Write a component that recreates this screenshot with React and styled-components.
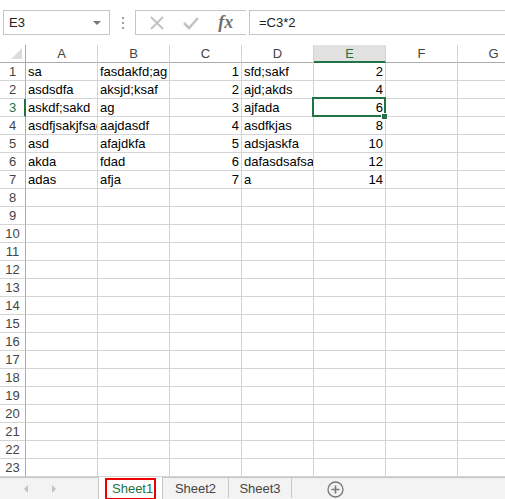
import React from "react";
import styled, { createGlobalStyle, css } from "styled-components";

const GREEN = "#217346";
const GRID = "#d4d4d4";
const EDGE = "#ababab";

const GlobalStyle = createGlobalStyle`
  html, body {
    margin: 0;
    padding: 0;
    background: #ffffff;
    font-family: "Liberation Sans", Arial, sans-serif;
    overflow: hidden;
  }
`;

const Page = styled.div`
  width: 505px;
  height: 499px;
  display: flex;
  flex-direction: column;
  overflow: hidden;
  background: #fff;
`;

const Toolbar = styled.div`
  height: 45px;
  flex: none;
  display: flex;
  align-items: flex-start;
  padding: 10px 0 0 3px;
  box-sizing: border-box;
`;

const NameBox = styled.div`
  width: 107px;
  height: 25px;
  box-sizing: border-box;
  border: 1px solid #c6c6c6;
  display: flex;
  align-items: center;
  justify-content: space-between;
  padding: 0 8px 0 5px;
  font-size: 13px;
  color: #222;
`;

const Caret = styled.span`
  width: 0;
  height: 0;
  border-left: 4px solid transparent;
  border-right: 4px solid transparent;
  border-top: 4px solid #777;
`;

const Dots = styled.div`
  width: 25px;
  height: 25px;
  display: flex;
  flex-direction: column;
  align-items: center;
  justify-content: center;
  gap: 3px;
  span {
    width: 2px;
    height: 2px;
    background: #a0a0a0;
  }
`;

const FxGroup = styled.div`
  width: 111px;
  height: 25px;
  box-sizing: border-box;
  border: 1px solid #c6c6c6;
  border-right: none;
  display: flex;
  align-items: center;
  justify-content: space-around;
  padding: 0 4px;
`;

const FxLabel = styled.span`
  font-family: "Liberation Serif", "Times New Roman", serif;
  font-style: italic;
  font-weight: bold;
  font-size: 18px;
  color: #6f6f6f;
`;

const FormulaInput = styled.div`
  flex: 1;
  height: 25px;
  margin-left: 3px;
  box-sizing: border-box;
  border-top: 1px solid #c6c6c6;
  border-bottom: 1px solid #c6c6c6;
  border-left: 1px solid #c6c6c6;
  display: flex;
  align-items: center;
  padding-left: 9px;
  font-size: 13px;
  color: #222;
`;

const Sheet = styled.div`
  flex: none;
  display: grid;
  grid-template-columns: 26px repeat(7, 72px);
  grid-auto-rows: 18px;
  overflow: hidden;
  width: 505px;
`;

const Corner = styled.div`
  position: relative;
  box-sizing: border-box;
  border-right: 1px solid ${EDGE};
  border-bottom: 1px solid ${EDGE};
  &::after {
    content: "";
    position: absolute;
    right: 3px;
    bottom: 3px;
    width: 0;
    height: 0;
    border-left: 11px solid transparent;
    border-bottom: 11px solid #dcdcdc;
  }
`;

const ColHead = styled.div`
  box-sizing: border-box;
  border-right: 1px solid ${GRID};
  border-bottom: 1px solid ${EDGE};
  display: flex;
  align-items: center;
  justify-content: center;
  font-size: 13px;
  color: #444;
  ${(p) =>
    p.$active &&
    css`
      background: #e1e1e1;
      color: ${GREEN};
      border-bottom: 2px solid ${GREEN};
    `}
`;

const RowHead = styled.div`
  box-sizing: border-box;
  border-right: 1px solid ${EDGE};
  border-bottom: 1px solid ${GRID};
  display: flex;
  align-items: center;
  justify-content: center;
  font-size: 13px;
  color: #444;
  ${(p) =>
    p.$active &&
    css`
      color: ${GREEN};
      border-right: 2px solid ${GREEN};
      padding-left: 1px;
    `}
`;

const Cell = styled.div`
  position: relative;
  box-sizing: border-box;
  border-right: 1px solid ${GRID};
  border-bottom: 1px solid ${GRID};
  padding: 0 2px;
  font-size: 13px;
  line-height: 17px;
  color: #000;
  white-space: nowrap;
  overflow: ${(p) => (p.$selected ? "visible" : "hidden")};
  text-align: ${(p) => (p.$num ? "right" : "left")};
  ${(p) =>
    p.$selected &&
    css`
      z-index: 2;
      &::before {
        content: "";
        position: absolute;
        left: -2px;
        top: -2px;
        right: -1px;
        bottom: -1px;
        border: 2px solid ${GREEN};
        pointer-events: none;
      }
      &::after {
        content: "";
        position: absolute;
        right: -3px;
        bottom: -4px;
        width: 5px;
        height: 5px;
        background: ${GREEN};
        border: 1px solid #fff;
      }
    `}
`;

const TabBar = styled.div`
  flex: 1;
  display: flex;
  align-items: stretch;
  background: #f3f3f3;
  border-top: 1px solid #c6c6c6;
  box-sizing: border-box;
`;

const Nav = styled.div`
  width: 98px;
  display: flex;
  align-items: center;
  padding-left: 24px;
  gap: 24px;
  box-sizing: border-box;
`;

const Arrow = styled.span`
  width: 0;
  height: 0;
  border-top: 4px solid transparent;
  border-bottom: 4px solid transparent;
  ${(p) =>
    p.$dir === "left"
      ? css`border-right: 4px solid #c2c2c2;`
      : css`border-left: 4px solid #c2c2c2;`}
`;

const Tab = styled.div`
  display: flex;
  align-items: center;
  justify-content: center;
  width: ${(p) => p.$w}px;
  box-sizing: border-box;
  font-size: 13px;
  color: #444;
  border-right: 1px solid #c6c6c6;
  margin-bottom: 2px;
  ${(p) =>
    p.$active &&
    css`
      background: #fff;
      color: ${GREEN};
      border-left: 1px solid #c6c6c6;
      margin-top: -1px;
      margin-bottom: 0;
    `}
`;

const Marked = styled.span`
  border: 2px solid #ee0000;
  padding: 1px 2px 2px 5px;
  margin-top: 1px;
  align-self: stretch;
  display: flex;
  align-items: center;
  box-sizing: border-box;
  width: 51px;
`;

const AddButton = styled.div`
  margin-left: 35px;
  display: flex;
  align-items: center;
`;

const cols = ["A", "B", "C", "D", "E", "F", "G"];
const data = [
  ["sa", "fasdakfd;ag", 1, "sfd;sakf", 2],
  ["asdsdfa", "aksjd;ksaf", 2, "ajd;akds", 4],
  ["askdf;sakd", "ag", 3, "ajfada", 6],
  ["asdfjsakjfsad", "aajdasdf", 4, "asdfkjas", 8],
  ["asd", "afajdkfa", 5, "adsjaskfa", 10],
  ["akda", "fdad", 6, "dafasdsafsaf", 12],
  ["adas", "afja", 7, "a", 14],
];

export default function App() {
  const rows = Array.from({ length: 23 }, (_, i) => i + 1);
  return (
    <Page>
      <GlobalStyle />
      <Toolbar>
        <NameBox>
          E3
          <Caret />
        </NameBox>
        <Dots>
          <span />
          <span />
          <span />
        </Dots>
        <FxGroup>
          <svg width="16" height="16" viewBox="0 0 16 16">
            <path d="M2 2 L14 14 M14 2 L2 14" stroke="#c3c3c3" strokeWidth="2" fill="none" />
          </svg>
          <svg width="18" height="16" viewBox="0 0 18 16">
            <path d="M2 8 L7 13 L16 3" stroke="#c3c3c3" strokeWidth="2.6" fill="none" />
          </svg>
          <FxLabel>fx</FxLabel>
        </FxGroup>
        <FormulaInput>=C3*2</FormulaInput>
      </Toolbar>

      <Sheet>
        <Corner />
        {cols.map((c) => (
          <ColHead key={c} $active={c === "E"}>
            {c}
          </ColHead>
        ))}
        {rows.map((r) => {
          const d = data[r - 1] || [];
          return (
            <React.Fragment key={r}>
              <RowHead $active={r === 3}>{r}</RowHead>
              {cols.map((c, ci) => {
                const v = d[ci];
                return (
                  <Cell
                    key={c}
                    $num={typeof v === "number"}
                    $selected={r === 3 && c === "E"}
                  >
                    {v}
                  </Cell>
                );
              })}
            </React.Fragment>
          );
        })}
      </Sheet>

      <TabBar>
        <Nav>
          <Arrow $dir="left" />
          <Arrow $dir="right" />
        </Nav>
        <Tab $active $w={65}>
          <Marked>Sheet1</Marked>
        </Tab>
        <Tab $w={66}>Sheet2</Tab>
        <Tab $w={63}>Sheet3</Tab>
        <AddButton>
          <svg width="17" height="17" viewBox="0 0 17 17">
            <circle cx="8.5" cy="8.5" r="7.5" stroke="#777" strokeWidth="1.3" fill="none" />
            <path d="M8.5 4.5 V12.5 M4.5 8.5 H12.5" stroke="#777" strokeWidth="1.6" />
          </svg>
        </AddButton>
      </TabBar>
    </Page>
  );
}
